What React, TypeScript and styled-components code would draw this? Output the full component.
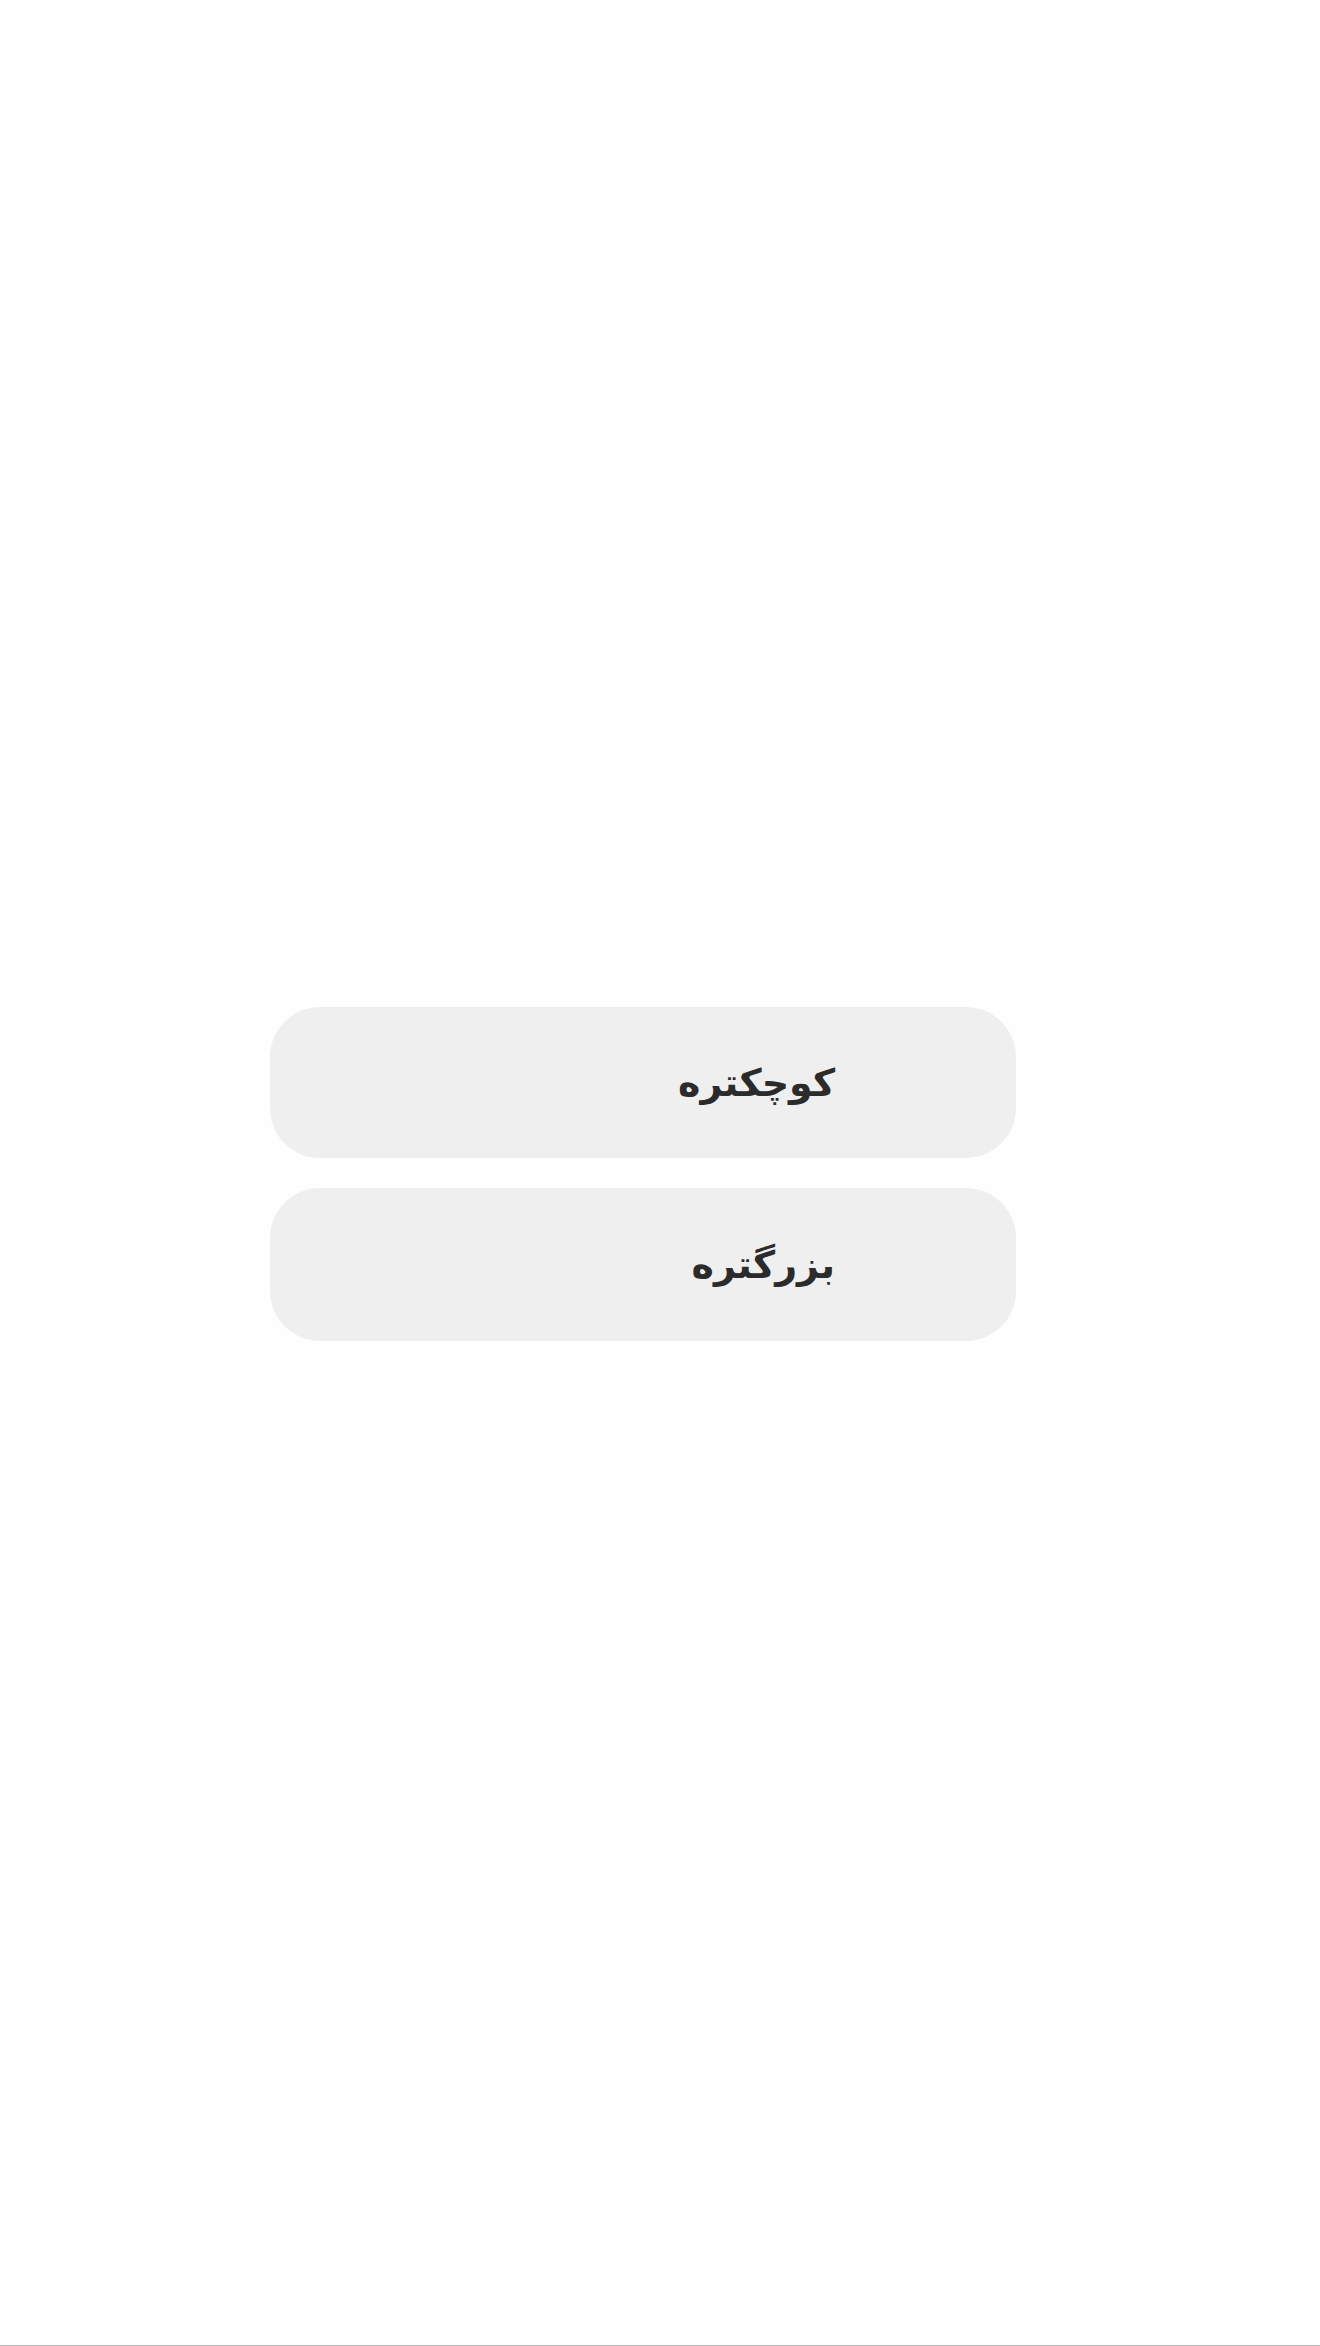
import React from "react";
import styled, { createGlobalStyle } from "styled-components";

const Global = createGlobalStyle`
  html, body { margin: 0; padding: 0; background: #fefefe; }
  * { box-sizing: border-box; }
`;

const Page = styled.div`
  height: 2346px;
  background: #fefefe;
  border-bottom: 1px solid #b8b8b8;
  padding: 1007px 0 0 270px;
  display: flex;
  flex-direction: column;
  gap: 30px;
`;

const Option = styled.button<{ $h: number }>`
  width: 746px;
  height: ${(p) => p.$h}px;
  border: none;
  border-radius: 50px;
  background: #efefef;
  display: flex;
  align-items: center;
  justify-content: flex-start;
  direction: rtl;
  padding: 0 181px 0 0;
  font-family: "DejaVu Sans", sans-serif;
  font-weight: bold;
  font-size: 38px;
  color: #2b2b2b;
  cursor: pointer;
`;

export default function App() {
  return (
    <>
      <Global />
      <Page>
        <Option $h={151}>کوچکتره</Option>
        <Option $h={153}>بزرگتره</Option>
      </Page>
    </>
  );
}
